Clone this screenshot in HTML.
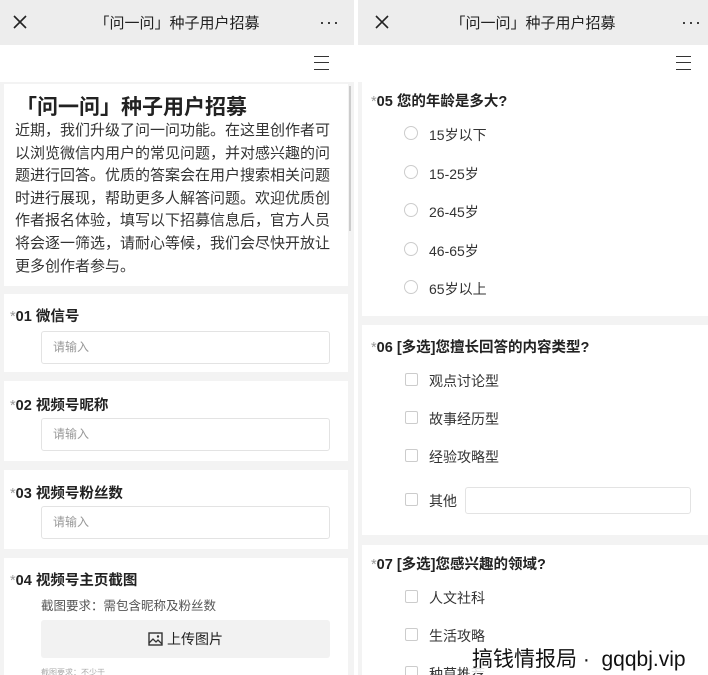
<!DOCTYPE html>
<html><head><meta charset="utf-8"><style>
*{margin:0;padding:0;box-sizing:border-box}
body{width:708px;height:675px;overflow:hidden;background:#fff;font-family:"Liberation Sans","Noto Sans CJK SC",sans-serif;color:#222;position:relative}
.p{position:absolute;top:0;height:675px;background:#f3f3f3;overflow:hidden}
.hd{position:absolute;left:0;right:0;top:0;height:45px;background:#ededed;font-size:15px;text-align:center;line-height:48px;color:#222}
.x{position:absolute;left:12px;top:14px;width:16px;height:16px}
.dots{position:absolute;right:14px;top:0;font-size:18px;letter-spacing:1px;line-height:44px}
.bar{position:absolute;left:0;right:0;top:45px;height:37px;background:#fff}
.menu{position:absolute;top:56px;width:15px;height:14px;border-top:1.5px solid #333;border-bottom:1.5px solid #333}
.menu:after{content:"";position:absolute;left:0;right:0;top:5px;border-top:1.5px solid #333}
.c{position:absolute;background:#fff}
.q{position:absolute;font-size:14.5px;font-weight:bold;color:#222}
.q i{font-style:normal;color:#999;font-weight:normal}
.inp{position:absolute;border:1px solid #e3e3e3;border-radius:3px;height:33px;font-size:12px;color:#999;line-height:31px;padding-left:11px;background:#fff}
.o{position:absolute;font-size:14px;color:#333}
.r{position:absolute;width:14px;height:14px;border:1px solid #ccc;border-radius:50%}
.b{position:absolute;width:13px;height:13px;border:1px solid #ccc;border-radius:2px}
</style></head><body>
<div class="p" style="left:0;width:354px">
 <div class="hd"><svg class="x" viewBox="0 0 16 16"><path d="M2 2L14 14M14 2L2 14" stroke="#222" stroke-width="1.6"/></svg>「问一问」种子用户招募<span class="dots">···</span></div>
 <div class="bar"></div><div class="menu" style="left:314px"></div>
 <div class="c" style="left:4px;top:84px;width:344px;height:202px"></div>
 <div style="position:absolute;left:349px;top:86px;width:2px;height:145px;background:#ccc"></div>
 <div style="position:absolute;left:16px;top:91px;font-size:21px;font-weight:bold">「问一问」种子用户招募</div>
 <div style="position:absolute;left:15px;top:120px;width:322px;font-size:15px;line-height:22.6px;color:#333">近期，我们升级了问一问功能。在这里创作者可以浏览微信内用户的常见问题，并对感兴趣的问题进行回答。优质的答案会在用户搜索相关问题时进行展现，帮助更多人解答问题。欢迎优质创作者报名体验，填写以下招募信息后，官方人员将会逐一筛选，请耐心等候，我们会尽快开放让更多创作者参与。</div>
 <div class="c" style="left:4px;top:294px;width:344px;height:78px"></div>
 <div class="q" style="left:10px;top:305px"><i>*</i>01 微信号</div>
 <div class="inp" style="left:41px;top:331px;width:289px">请输入</div>
 <div class="c" style="left:4px;top:381px;width:344px;height:80px"></div>
 <div class="q" style="left:10px;top:394px"><i>*</i>02 视频号昵称</div>
 <div class="inp" style="left:41px;top:418px;width:289px">请输入</div>
 <div class="c" style="left:4px;top:470px;width:344px;height:79px"></div>
 <div class="q" style="left:10px;top:482px"><i>*</i>03 视频号粉丝数</div>
 <div class="inp" style="left:41px;top:506px;width:289px">请输入</div>
 <div class="c" style="left:4px;top:558px;width:344px;height:117px"></div>
 <div class="q" style="left:10px;top:569px"><i>*</i>04 视频号主页截图</div>
 <div style="position:absolute;left:41px;top:595px;font-size:12.5px;color:#555">截图要求：需包含昵称及粉丝数</div>
 <div style="position:absolute;left:41px;top:620px;width:289px;height:38px;background:#f2f2f2;border-radius:3px;text-align:center;line-height:38px;font-size:14px">
  <svg width="15" height="14" viewBox="0 0 15 14" style="vertical-align:-2px;margin-right:4px"><rect x="1" y="1" width="13" height="12" fill="none" stroke="#333" stroke-width="1.4"/><path d="M1 11L5 7L8 10L10 8L14 12" fill="none" stroke="#333" stroke-width="1.3"/><circle cx="10" cy="4.5" r="1.2" fill="#333"/></svg>上传图片</div>
 <div style="position:absolute;left:41px;top:667px;font-size:8px;color:#aaa">截图要求：不少于</div>
</div>
<div class="p" style="left:358px;width:350px">
 <div class="hd"><svg class="x" viewBox="0 0 16 16" style="left:16px"><path d="M2 2L14 14M14 2L2 14" stroke="#222" stroke-width="1.6"/></svg>「问一问」种子用户招募<span class="dots" style="right:6px">···</span></div>
 <div class="bar"></div><div class="menu" style="left:318px"></div>
 <div class="c" style="left:4px;top:82px;width:346px;height:234px"></div>
 <div class="q" style="left:13px;top:90px"><i>*</i>05 您的年龄是多大?</div>
 <div class="r" style="left:46px;top:126px"></div><div class="o" style="left:71px;top:125px">15岁以下</div>
 <div class="r" style="left:46px;top:165px"></div><div class="o" style="left:71px;top:164px">15-25岁</div>
 <div class="r" style="left:46px;top:203px"></div><div class="o" style="left:71px;top:202px">26-45岁</div>
 <div class="r" style="left:46px;top:242px"></div><div class="o" style="left:71px;top:241px">46-65岁</div>
 <div class="r" style="left:46px;top:280px"></div><div class="o" style="left:71px;top:279px">65岁以上</div>
 <div class="c" style="left:4px;top:325px;width:346px;height:210px"></div>
 <div class="q" style="left:13px;top:336px"><i>*</i>06 [多选]您擅长回答的内容类型?</div>
 <div class="b" style="left:47px;top:373px"></div><div class="o" style="left:71px;top:371px">观点讨论型</div>
 <div class="b" style="left:47px;top:411px"></div><div class="o" style="left:71px;top:409px">故事经历型</div>
 <div class="b" style="left:47px;top:449px"></div><div class="o" style="left:71px;top:447px">经验攻略型</div>
 <div class="b" style="left:47px;top:493px"></div><div class="o" style="left:71px;top:491px">其他</div>
 <div class="inp" style="left:107px;top:487px;width:226px;height:27px"></div>
 <div class="c" style="left:4px;top:545px;width:346px;height:130px"></div>
 <div class="q" style="left:13px;top:553px"><i>*</i>07 [多选]您感兴趣的领域?</div>
 <div class="b" style="left:47px;top:590px"></div><div class="o" style="left:71px;top:588px">人文社科</div>
 <div class="b" style="left:47px;top:628px"></div><div class="o" style="left:71px;top:626px">生活攻略</div>
 <div class="b" style="left:47px;top:666px"></div><div class="o" style="left:71px;top:664px">种草推荐</div>
 <div style="position:absolute;left:110px;top:643px;width:225px;height:30px;background:rgba(255,255,255,0.85)"></div>
 <div style="position:absolute;left:114px;top:643px;font-size:21px;color:#111;white-space:nowrap">搞钱情报局 ·&nbsp; gqqbj.vip</div>
</div>
</body></html>
